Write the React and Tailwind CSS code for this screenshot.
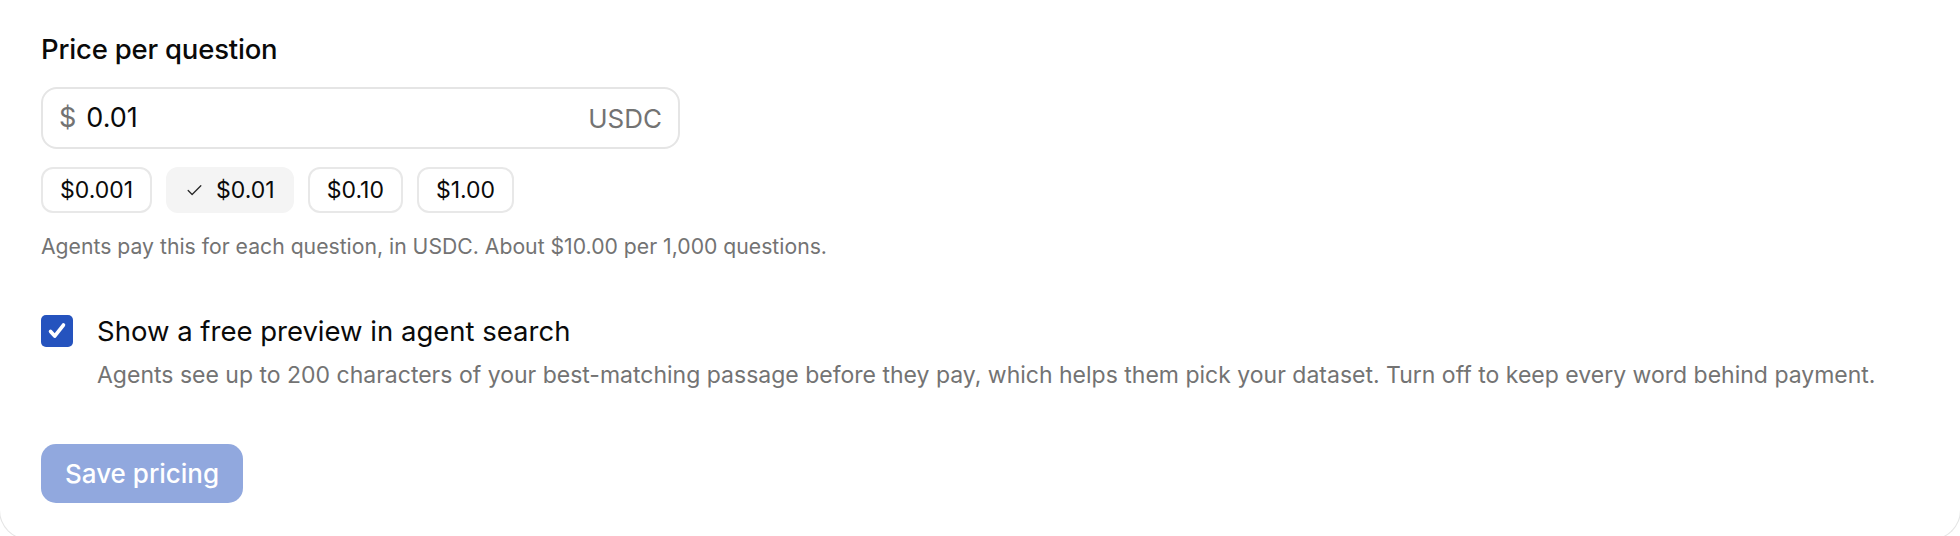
import { useState } from "react";

const presets = ["$0.001", "$0.01", "$0.10", "$1.00"];

const App = () => {
  const [price, setPrice] = useState("0.01");
  const [preview, setPreview] = useState(true);

  return (
    <div
      className="h-[536px] overflow-hidden bg-white"
      style={{ fontFamily: "Inter, 'Noto Sans', sans-serif" }}
    >
      {/* card-start */}
      <div className="-mx-px w-[calc(100%+2px)] h-[540px] border-x border-b border-[#e5e5e5] rounded-b-[30px] pl-[41px] pt-[32px]">
        <label htmlFor="price" className="block text-[27.5px] leading-[35px] font-medium text-[#0a0a0a] tracking-[-0.2px]">
          Price per question
        </label>

        {/* input-start */}
        <div className="mt-[20px] w-[639px] h-[62px] flex items-center border-2 border-[#e5e5e5] rounded-[16px] pl-[16px] pr-[16px]">
          <span className="text-[27px] text-[#737373]">$</span>
          <input
            id="price"
            className="ml-[10px] flex-1 outline-none text-[27px] text-[#0a0a0a] bg-transparent"
            value={price}
            onChange={(e) => setPrice(e.target.value)}
          />
          <span className="text-[26px] text-[#737373]">USDC</span>
        </div>
        {/* input-end */}

        {/* presets-start */}
        <div className="mt-[18px] flex gap-[14px]">
          {presets.map((p) => {
            const active = p === "$" + price;
            return (
              <button
                key={p}
                onClick={() => setPrice(p.slice(1))}
                className={
                  active
                    ? "h-[46px] px-[17px] flex items-center gap-[12px] rounded-[12px] border-2 border-[#f4f4f4] bg-[#f4f4f4] text-[23px] text-[#0a0a0a]"
                    : "h-[46px] px-[17px] flex items-center rounded-[12px] border-2 border-[#e8e8e8] bg-white text-[23px] text-[#0a0a0a]"
                }
              >
                {active && (
                  <svg width="19" height="19" viewBox="0 0 24 24" fill="none" stroke="#262626" strokeWidth="1.6" strokeLinecap="round" strokeLinejoin="round">
                    <path d="M20 6 9 17l-5-5" />
                  </svg>
                )}
                {p}
              </button>
            );
          })}
        </div>
        {/* presets-end */}

        <p className="mt-[18px] text-[21.2px] leading-[30px] text-[#737373]">
          Agents pay this for each question, in USDC. About $10.00 per 1,000 questions.
        </p>

        {/* preview-start */}
        <div className="mt-[53px] flex items-start gap-[24px]">
          <button
            onClick={() => setPreview(!preview)}
            className={
              preview
                ? "mt-[1px] w-[32px] h-[32px] shrink-0 rounded-[5px] bg-[#2553be] flex items-center justify-center"
                : "mt-[1px] w-[32px] h-[32px] shrink-0 rounded-[5px] border-2 border-[#767676] bg-white"
            }
          >
            {preview && (
              <svg width="22" height="22" viewBox="0 0 24 24" fill="none" stroke="white" strokeWidth="4" strokeLinecap="round" strokeLinejoin="round">
                <path d="M5 12.5l4.5 5L19 5.5" />
              </svg>
            )}
          </button>
          <div>
            <p className="text-[27.5px] leading-[35px] text-[#0a0a0a]">Show a free preview in agent search</p>
            <p className="mt-[11px] text-[23px] leading-[30px] text-[#737373]">
              Agents see up to 200 characters of your best-matching passage before they pay, which helps them pick your dataset. Turn off to keep every word behind payment.
            </p>
          </div>
        </div>
        {/* preview-end */}

        <button
          disabled
          className="mt-[54px] h-[59px] px-[24px] rounded-[15px] bg-[#2553be] opacity-50 text-white text-[26px] font-medium"
        >
          Save pricing
        </button>
      </div>
      {/* card-end */}
    </div>
  );
};
export default App;
